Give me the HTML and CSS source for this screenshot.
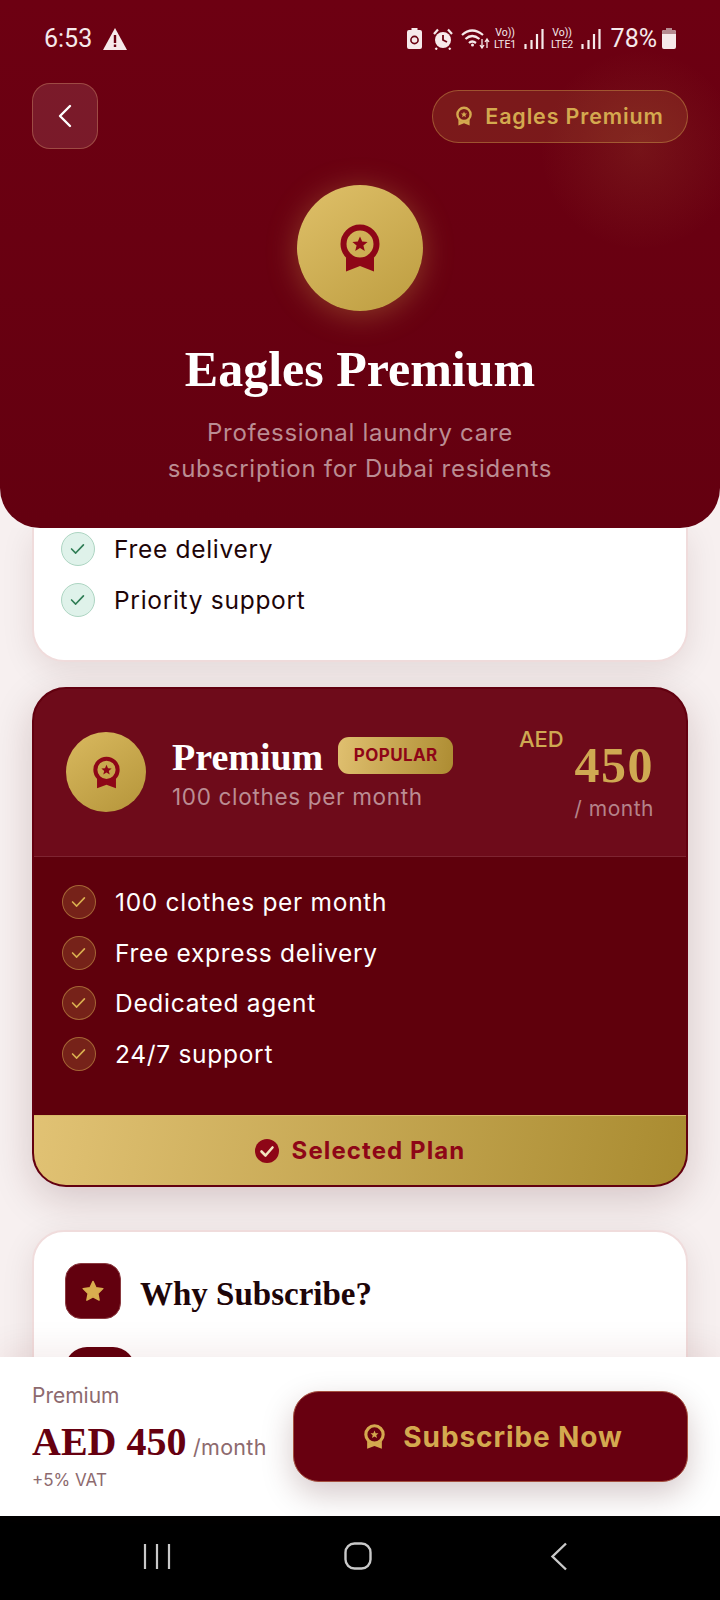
FILE: index.html
```html
<!DOCTYPE html>
<html lang="en">
<head>
    <meta charset="UTF-8">
    <title>Eagles Premium</title>
    <link rel="stylesheet" href="styles.css">
</head>
<body>
    <svg class="defs" width="0" height="0">
        <symbol id="award" viewBox="0 0 40 48">
            <circle cx="20" cy="20" r="16.5" fill="none" stroke="currentColor" stroke-width="6"/>
            <path d="M6 33 V47.5 L20 42 L34 47.5 V33 L28 37 H12 Z" fill="currentColor"/>
            <path d="M20 12.5 L22.2 17.6 L27.6 18 L23.4 21.6 L24.8 27 L20 24.1 L15.2 27 L16.6 21.6 L12.4 18 L17.8 17.6 Z" fill="currentColor"/>
        </symbol>
        <symbol id="check" viewBox="0 0 34 34">
            <path d="M10.5 17.5 L15 22 L23.5 13" fill="none" stroke="currentColor" stroke-width="1.8" stroke-linecap="round" stroke-linejoin="round"/>
        </symbol>
        <symbol id="signal" viewBox="0 0 20 22">
            <path d="M1.5 16 V21 M7.5 12 V21 M13 6 V21 M18.5 1 V21" fill="none" stroke="currentColor" stroke-width="2.2"/>
        </symbol>
    </svg>

    <header class="hero">
        <div class="status">
            <span class="time">6:53</span>
            <svg class="st-warn" viewBox="0 0 24 22"><path d="M12 0 L24 22 H0 Z" fill="#f6e9ea"/><path d="M10.8 7 H13.2 V15 H10.8 Z M10.8 16.5 H13.2 V19 H10.8 Z" fill="#6a0010"/></svg>
            <span class="status-right">
                <svg class="st-batt" viewBox="0 0 15 21"><path d="M4.5 0 H10.5 V2 H13 Q15 2 15 4 V19 Q15 21 13 21 H2 Q0 21 0 19 V4 Q0 2 2 2 H4.5 Z" fill="#f6e9ea"/><circle cx="7.5" cy="12" r="3.6" fill="none" stroke="#6a0010" stroke-width="1.6"/></svg>
                <svg class="st-alarm" viewBox="0 0 20 22"><circle cx="10" cy="12" r="8" fill="#f6e9ea"/><path d="M10 7 V12 L14 14" fill="none" stroke="#6a0010" stroke-width="1.8"/><path d="M1 6 L5 1.5 M19 6 L15 1.5 M4 20 L2.5 21.5 M16 20 L17.5 21.5" stroke="#f6e9ea" stroke-width="2.2"/></svg>
                <svg class="st-wifi" viewBox="0 0 29 21"><path d="M1 7 Q11 -2 22 7 M4.500 11 Q11 5 18.500 11 M8 15 Q11 12 15 15" fill="none" stroke="#f6e9ea" stroke-width="2.200"/><path d="M11.500 17 L11.500 17.100" stroke="#f6e9ea" stroke-width="3" stroke-linecap="round"/><path d="M21 11 V19 M19 17 L21 20 L23 17 M26 20 V12 M24 14 L26 11 L28 14" fill="none" stroke="#f6e9ea" stroke-width="1.300"/></svg>
                <span class="lte lte-one"><span>Vo))</span><span>LTE1</span></span>
                <svg class="st-signal" viewBox="0 0 20 22"><use href="#signal"/></svg>
                <span class="lte lte-two"><span>Vo))</span><span>LTE2</span></span>
                <svg class="st-signal" viewBox="0 0 20 22"><use href="#signal"/></svg>
                <span class="pct">78%</span>
                <svg class="st-level" viewBox="0 0 14 21"><path d="M4 0 H10 V2 H12 Q14 2 14 4 V19 Q14 21 12 21 H2 Q0 21 0 19 V4 Q0 2 2 2 H4 Z" fill="#f6e9ea"/><path d="M4 0 H10 V2 H12 Q14 2 14 4 V6 H0 V4 Q0 2 2 2 H4 Z" fill="#b58a90"/></svg>
            </span>
        </div>

        <div class="topbar">
            <button class="back">
                <svg width="16" height="24" viewBox="0 0 16 24"><path d="M13 2 L3 12 L13 22" fill="none" stroke="#fff" stroke-width="2.400" stroke-linecap="round" stroke-linejoin="round"/></svg>
            </button>
            <div class="pill">
                <svg class="award-sm"><use href="#award"/></svg>
                <span>Eagles Premium</span>
            </div>
        </div>

        <div class="coin">
            <svg class="award-lg"><use href="#award"/></svg>
        </div>
        <h1>Eagles Premium</h1>
        <p class="sub">Professional laundry care<br>subscription for Dubai residents</p>
    </header>

    <main>
        <section class="card card-plain">
            <ul class="features">
                <li><span class="tick"><svg><use href="#check"/></svg></span>Free delivery</li>
                <li><span class="tick"><svg><use href="#check"/></svg></span>Priority support</li>
            </ul>
        </section>

        <section class="card card-selected">
            <div class="plan-head">
                <div class="plan-coin"><svg><use href="#award"/></svg></div>
                <div class="plan-info">
                    <div class="plan-title">
                        <h2>Premium</h2>
                        <span class="popular">POPULAR</span>
                    </div>
                    <div class="plan-sub">100 clothes per month</div>
                </div>
                <div class="plan-price">
                    <span class="cur">AED</span>
                    <span class="num">450</span>
                    <span class="per">/ month</span>
                </div>
            </div>
            <ul class="features features-dark">
                <li><span class="tick"><svg><use href="#check"/></svg></span>100 clothes per month</li>
                <li><span class="tick"><svg><use href="#check"/></svg></span>Free express delivery</li>
                <li><span class="tick"><svg><use href="#check"/></svg></span>Dedicated agent</li>
                <li><span class="tick"><svg><use href="#check"/></svg></span>24/7 support</li>
            </ul>
            <div class="selected">
                <svg width="24" height="24" viewBox="0 0 24 24"><circle cx="12" cy="12" r="12" fill="#8e0617"/><path d="M6.500 12.500 L10.500 16.500 L17.500 8.500" fill="none" stroke="#f3e3c0" stroke-width="2.600" stroke-linecap="round" stroke-linejoin="round"/></svg>
                <span>Selected Plan</span>
            </div>
        </section>

        <section class="card card-why">
            <div class="why-head">
                <span class="why-icon">
                    <svg width="22" height="22" viewBox="0 0 24 24"><path d="M12 1.500 L15.300 8.400 L22.800 9.400 L17.300 14.600 L18.700 22 L12 18.400 L5.300 22 L6.700 14.600 L1.200 9.400 L8.700 8.400 Z" fill="#d9ae4f" stroke="#d9ae4f" stroke-width="1.500" stroke-linejoin="round"/></svg>
                </span>
                <h3>Why Subscribe?</h3>
            </div>
            <div class="why-next"></div>
        </section>
    </main>

    <footer class="bar">
        <div class="bar-price">
            <div class="bar-plan">Premium</div>
            <div class="bar-amount"><strong>AED 450</strong> <span>/month</span></div>
            <div class="bar-vat">+5% VAT</div>
        </div>
        <button class="subscribe">
            <svg class="award-btn"><use href="#award"/></svg>
            <span>Subscribe Now</span>
        </button>
    </footer>

    <nav class="navbar">
        <svg width="28" height="27" viewBox="0 0 28 27"><path d="M2 1 V26 M14 1 V26 M26 1 V26" stroke="#c9c9c9" stroke-width="2.200"/></svg>
        <svg class="nav-home" width="28" height="28" viewBox="0 0 28 28"><rect x="1.500" y="1.500" width="25" height="25" rx="9" fill="none" stroke="#c9c9c9" stroke-width="2.400"/></svg>
        <svg width="18" height="29" viewBox="0 0 18 29"><path d="M16 1.500 L2.500 14.500 L16 27.500" fill="none" stroke="#c9c9c9" stroke-width="2.400"/></svg>
    </nav>
</body>
</html>
```

FILE: styles.css
```css
* {
    box-sizing: border-box;
}

body {
    margin: 0;
    width: 720px;
    height: 1600px;
    overflow: hidden;
    display: flex;
    flex-direction: column;
    font-family: Inter, "Liberation Sans", sans-serif;
    background-color: #f7f0f0;
    color: #1e0508;
}

.defs {
    position: absolute;
}

ul {
    list-style: none;
    margin: 0;
    padding: 0;
}

button {
    font-family: inherit;
    cursor: pointer;
}

/* header */
.hero {
    position: relative;
    z-index: 2;
    height: 528px;
    flex-shrink: 0;
    padding: 0 32px;
    border-radius: 0 0 40px 40px;
    text-align: center;
    background:
        radial-gradient(circle at 640px 150px, rgba(212, 170, 80, 0.11), rgba(212, 170, 80, 0) 100px),
        linear-gradient(180deg, #6d0012, #640010);
}

.status {
    height: 83px;
    padding: 0 12px 6px;
    display: flex;
    align-items: center;
    color: #f6e9ea;
}

.time {
    font-family: Roboto, sans-serif;
    font-size: 25px;
}

.st-warn {
    width: 24px;
    height: 22px;
    margin-left: 11px;
}

.status-right {
    margin-left: auto;
    display: flex;
    align-items: center;
}

.st-batt {
    width: 15px;
    height: 21px;
}

.st-alarm {
    width: 20px;
    height: 22px;
    margin-left: 11px;
}

.st-wifi {
    width: 29px;
    height: 21px;
    margin-left: 8px;
}

.lte {
    width: 25px;
    display: flex;
    flex-direction: column;
    align-items: center;
    gap: 1px;
    font-family: Roboto, sans-serif;
    font-size: 10.500px;
    line-height: 11px;
}

.lte-one {
    margin-left: 3px;
}

.lte-two {
    margin-left: 6px;
}

.st-signal {
    width: 20px;
    height: 22px;
    margin-left: 6px;
    color: #f6e9ea;
}

.pct {
    margin-left: 10px;
    font-family: Roboto, sans-serif;
    font-size: 25px;
}

.st-level {
    width: 14px;
    height: 21px;
    margin-left: 5px;
}

.topbar {
    display: flex;
    justify-content: space-between;
    align-items: center;
}

.back {
    width: 66px;
    height: 66px;
    padding: 0;
    display: flex;
    align-items: center;
    justify-content: center;
    background-color: rgba(255, 255, 255, 0.1);
    border: 1.500px solid rgba(212, 150, 110, 0.4);
    border-radius: 18px;
}

.pill {
    width: 256px;
    height: 53px;
    display: flex;
    align-items: center;
    justify-content: center;
    gap: 13px;
    color: #d4a94f;
    font-size: 21.500px;
    font-weight: 600;
    letter-spacing: 0.85px;
    background-color: rgba(212, 170, 80, 0.15);
    border: 1.500px solid rgba(212, 170, 80, 0.4);
    border-radius: 27px;
}

.award-sm {
    width: 16px;
    height: 20px;
}

.coin {
    width: 126px;
    height: 126px;
    margin: 36px auto 0;
    display: flex;
    align-items: center;
    justify-content: center;
    border-radius: 50%;
    color: #8e0617;
    background: linear-gradient(145deg, #dfc069, #bd9d40);
    box-shadow: 0 4px 30px rgba(212, 170, 80, 0.35);
}

.award-lg {
    width: 40px;
    height: 48px;
}

h1 {
    margin: 22px 0 0;
    font-family: "Liberation Serif", serif;
    font-size: 50px;
    line-height: 72px;
    font-weight: 700;
    color: #fff;
}

.sub {
    margin: 10px 0 0;
    font-size: 24px;
    line-height: 36px;
    letter-spacing: 0.7px;
    color: #bb8d93;
}

/* plans */
main {
    flex: 1;
    min-height: 0;
    padding: 0 32px;
    overflow: hidden;
}

.card {
    background-color: #fff;
    border: 2px solid #f0dcdc;
    border-radius: 32px;
    box-shadow: 0 8px 32px rgba(60, 0, 10, 0.1);
}

.card-plain {
    height: 134px;
    padding: 4px 27px 0;
    border-top: none;
    border-radius: 0 0 32px 32px;
}

.features {
    display: flex;
    flex-direction: column;
    gap: 16.600px;
}

.features li {
    display: flex;
    align-items: center;
    gap: 19px;
    font-size: 24.500px;
    letter-spacing: 0.7px;
    line-height: 34px;
}

.tick {
    width: 34px;
    height: 34px;
    border-radius: 50%;
    color: #2f7d55;
    background-color: #dff2ea;
    border: 1.500px solid #add5c2;
}

.tick svg {
    display: block;
    width: 31px;
    height: 31px;
}

.card-selected {
    height: 500px;
    margin-top: 25px;
    overflow: hidden;
    display: flex;
    flex-direction: column;
    background-color: #5f000c;
    border: 2px solid #630010;
    border-radius: 34px;
    box-shadow: 0 12px 40px rgba(60, 0, 10, 0.18);
}

.plan-head {
    height: 168px;
    padding: 43px 32px 0;
    display: flex;
    background-color: #6e0b1a;
    border-bottom: 1px solid #7e2431;
}

.plan-coin {
    width: 80px;
    height: 80px;
    flex-shrink: 0;
    display: flex;
    align-items: center;
    justify-content: center;
    border-radius: 50%;
    color: #8e0617;
    background: linear-gradient(145deg, #d9b95f, #b5953a);
}

.plan-coin svg {
    width: 27px;
    height: 33px;
}

.plan-info {
    margin-left: 26px;
    padding-top: 2px;
}

.plan-title {
    display: flex;
    align-items: center;
    gap: 15px;
}

h2 {
    margin: 0;
    font-family: "Liberation Serif", serif;
    font-size: 38px;
    line-height: 46px;
    color: #fff;
}

.popular {
    width: 115px;
    height: 37px;
    margin-top: -4px;
    display: flex;
    align-items: center;
    justify-content: center;
    font-size: 17px;
    font-weight: 700;
    color: #8e0617;
    letter-spacing: 0.4px;
    border-radius: 11px;
    background: linear-gradient(100deg, #e0c070, #ad8c32);
}

.plan-sub {
    margin-top: 2px;
    font-size: 22.500px;
    letter-spacing: 0.68px;
    line-height: 30px;
    color: #bb8d93;
}

.plan-price {
    width: 135px;
    margin-left: auto;
    margin-top: -6px;
    display: flex;
    flex-direction: column;
    align-items: flex-end;
}

.cur {
    align-self: flex-start;
    font-size: 22px;
    line-height: 26px;
    font-weight: 500;
    color: #cfa952;
}

.num {
    margin-top: -12px;
    font-family: "Liberation Serif", serif;
    font-size: 50px;
    line-height: 50px;
    font-weight: 700;
    letter-spacing: 1.500px;
    color: #cfa952;
}

.per {
    margin-top: 5px;
    font-size: 21px;
    letter-spacing: 0.5px;
    line-height: 28px;
    color: #b5838a;
}

.features-dark {
    flex: 1;
    padding: 28px 28px 0;
}

.features-dark li {
    color: #fff;
}

.features-dark .tick {
    color: #d9ae4f;
    background-color: rgba(212, 170, 80, 0.2);
    border-color: rgba(212, 170, 80, 0.5);
}

.selected {
    height: 70px;
    flex-shrink: 0;
    display: flex;
    align-items: center;
    justify-content: center;
    gap: 13px;
    font-size: 24px;
    font-weight: 700;
    letter-spacing: 1.100px;
    color: #8e0617;
    background: linear-gradient(100deg, #e1c274, #a98b30);
    border-top: 1px solid #d8b968;
}

.card-why {
    height: 300px;
    margin-top: 43px;
    padding: 31px 31px 0;
}

.why-head {
    display: flex;
    align-items: center;
    gap: 19px;
}

.why-icon {
    width: 56px;
    height: 56px;
    display: flex;
    align-items: center;
    justify-content: center;
    border-radius: 16px;
    background-color: #62000e;
    border: 1px solid #8a3a40;
}

h3 {
    margin: 5px 0 0;
    font-family: "Liberation Serif", serif;
    font-size: 33px;
    line-height: 44px;
}

.why-next {
    width: 70px;
    height: 56px;
    margin-top: 28px;
    border-radius: 22px;
    background-color: #62000e;
}

/* bottom bar */
.bar {
    position: relative;
    z-index: 2;
    height: 159px;
    flex-shrink: 0;
    padding: 0 32px;
    display: flex;
    align-items: center;
    justify-content: space-between;
    background-color: #fff;
    box-shadow: 0 -10px 30px rgba(110, 0, 20, 0.07);
}

.bar-plan {
    font-size: 21px;
    line-height: 26px;
    color: #8d6a6e;
}

.bar-amount {
    margin-top: 10px;
    line-height: 46px;
    white-space: nowrap;
}

.bar-amount strong {
    font-family: "Liberation Serif", serif;
    font-size: 40px;
    color: #660010;
}

.bar-amount span {
    margin-left: 2px;
    font-size: 21.500px;
    letter-spacing: 0.3px;
    color: #8d6a6e;
}

.bar-vat {
    margin-top: -3px;
    font-size: 17px;
    line-height: 22px;
    color: #8d6a6e;
}

.subscribe {
    width: 395px;
    height: 91px;
    padding: 0 0 0 6px;
    display: flex;
    align-items: center;
    justify-content: center;
    gap: 18px;
    font-size: 28px;
    font-weight: 700;
    letter-spacing: 0.9px;
    color: #d4a94f;
    background-color: #680010;
    border: 1.500px solid #a5503f;
    border-radius: 26px;
    box-shadow: 0 12px 32px rgba(60, 0, 10, 0.22);
}

.award-btn {
    width: 21px;
    height: 27px;
}

.navbar {
    height: 84px;
    flex-shrink: 0;
    padding: 0 152px 4px 143px;
    display: flex;
    align-items: center;
    justify-content: space-between;
    background-color: #000;
}

.nav-home {
    margin-right: 6px;
}
```
